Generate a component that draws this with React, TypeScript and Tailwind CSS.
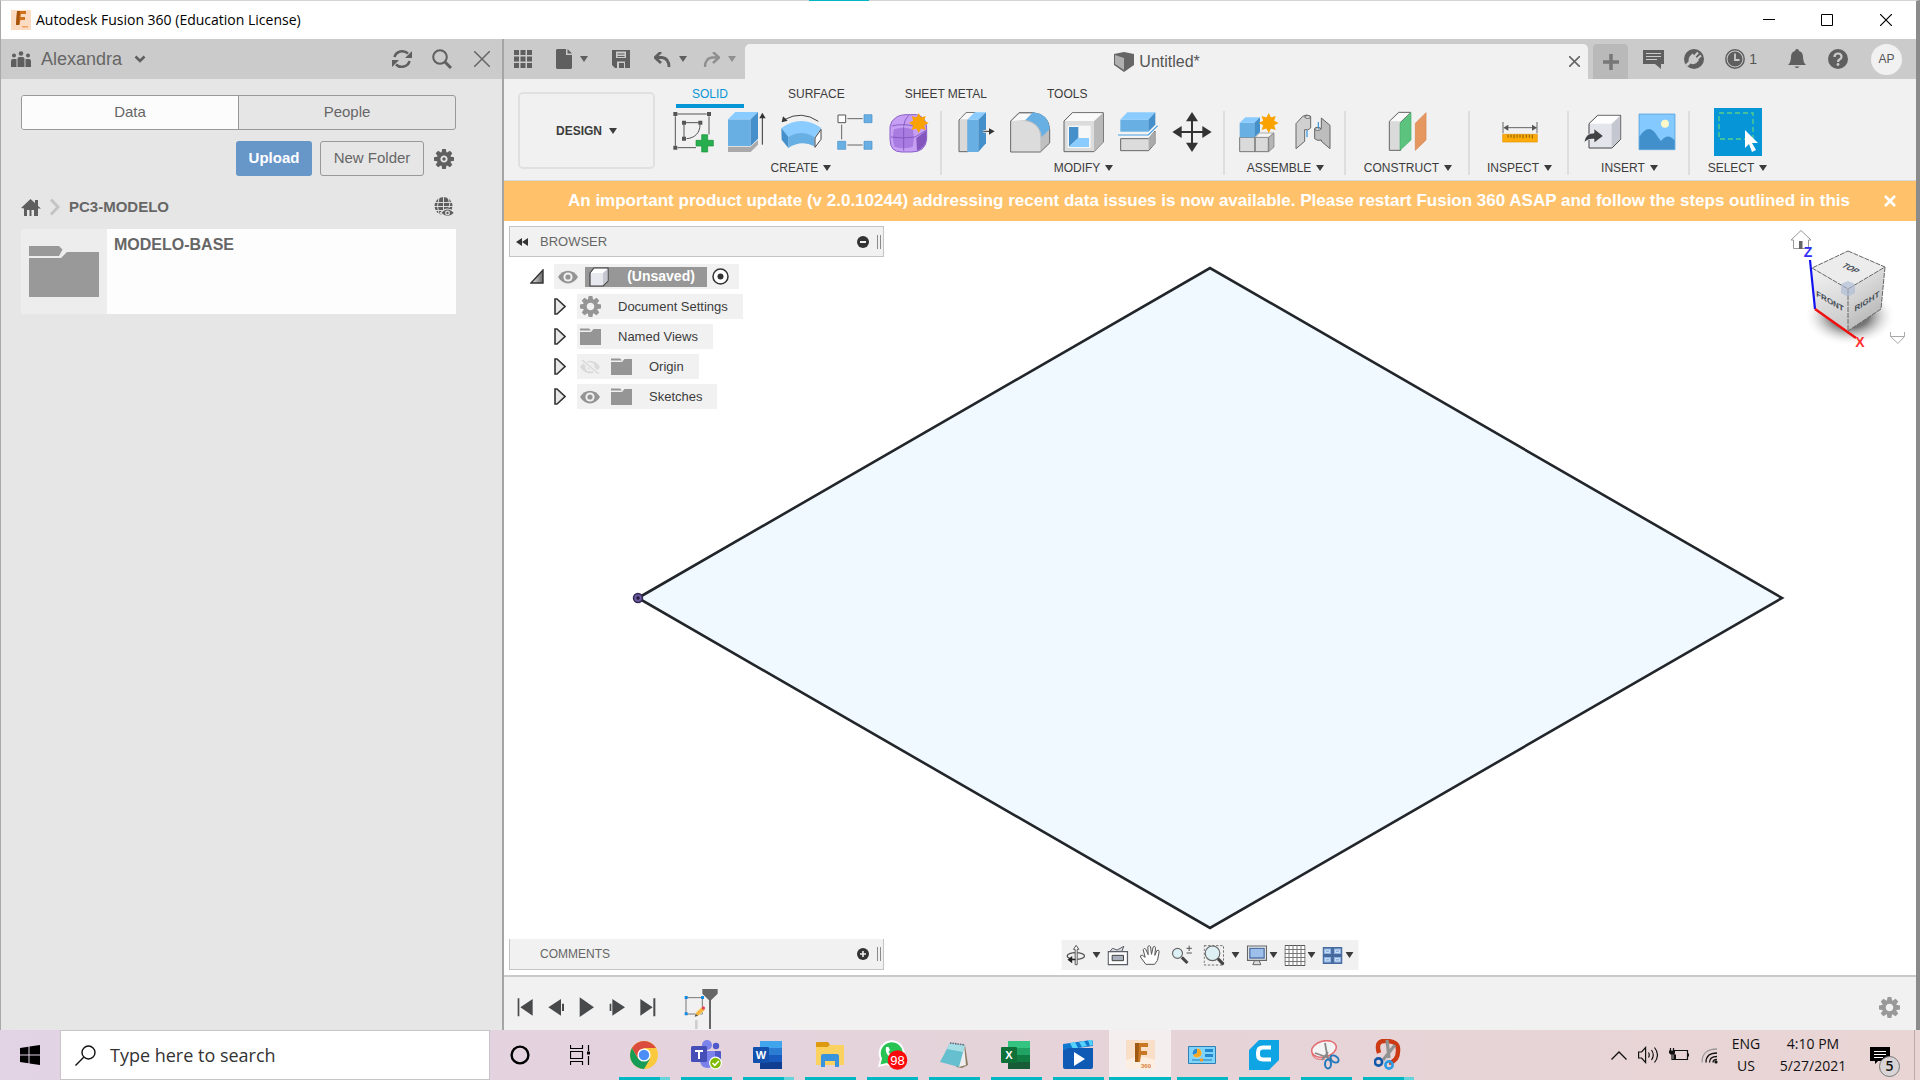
import React from "react";

type IconProps = { w: number; h: number; box: string; children: React.ReactNode; label?: string };

function Icon({ w, h, box, children }: IconProps) {
  return (
    <svg width={w} height={h} viewBox={box} className="block shrink-0" aria-hidden="true">
      {children}
    </svg>
  );
}

const Caret = ({ color = "#3c3c3c" }: { color?: string }) => (
  <Icon w={8} h={6} box="0 0 8 6">
    <path d="M0 0h8L4 6z" fill={color} />
  </Icon>
);

const GEAR_TEETH = [0, 45, 90, 135, 180, 225, 270, 315];

function Gear({ size = 20, color = "#5f5f5f", dot = false }: { size?: number; color?: string; dot?: boolean }) {
  return (
    <Icon w={size} h={size} box="-10 -10 20 20">
      <g fill={color}>
        {GEAR_TEETH.map((a) => (
          <path key={a} d="M-1.800 -10h3.600l.8 4h-5.200z" transform={`rotate(${a})`} />
        ))}
      </g>
      <circle r="5.300" fill="none" stroke={color} strokeWidth="3.400" />
      {dot && <circle r="1.700" fill={color} />}
    </Icon>
  );
}

function Eye({ off = false }: { off?: boolean }) {
  const c = off ? "#dadada" : "#949494";
  return (
    <Icon w={20} h={14} box="0 0 20 14">
      <path d="M0 7C5-1.500 15-1.500 20 7 15 15.500 5 15.500 0 7z" fill={c} />
      <circle cx="10" cy="7" r="4.600" fill="#f1f1f1" />
      <circle cx="10" cy="7" r="2.600" fill={c} />
      {off && (
        <>
          <path d="M2 0l17 14" stroke="#f1f1f1" strokeWidth="4" />
          <path d="M2 0l17 14" stroke={c} strokeWidth="1.600" />
        </>
      )}
    </Icon>
  );
}

const SmallFolder = () => (
  <Icon w={21} h={17} box="0 0 21 17">
    <path d="M0 .5h9l2 2H0zM0 4h11l2.500-3H21v16H0z" fill="#959595" />
  </Icon>
);

const Star = ({ x, y }: { x: number; y: number }) => (
  <g transform={`translate(${x} ${y})`} fill="#f9a200">
    {[0, 45, 90, 135, 180, 225, 270, 315].map((a) => (
      <path key={a} d="M-9 -12L0 -30L9 -12z" transform={`rotate(${a})`} />
    ))}
    <circle r="18" />
  </g>
);

/* ---------- ribbon icons ---------- */

const SketchIcon = () => (
  <Icon w={42} h={42} box="520 245 126 126">
    <g stroke="#555" strokeWidth="3" fill="none">
      <path d="M536 254h88M530 261v88M631 261v54M537 355h55M556 285v40M562 280h38M604 286c0 24-15 40-40 42" />
    </g>
    <path d="M524 248h12v12h-12zM625 248h12v12h-12zM524 349h12v12h-12zM550 274h12v12h-12zM599 274h12v12h-12zM550 322h12v12h-12z" fill="#555" />
    <path d="M609 316h18v17h17v17h-17v18h-18v-18h-17v-17h17z" fill="#27ae4f" stroke="#18913b" strokeWidth="2" />
  </Icon>
);
const ExtrudeIcon = () => (
  <Icon w={40} h={42} box="686 245 120 126">
    <path d="M689 352h68l22-20v14l-22 22h-68z" fill="#a9a9a9" />
    <path d="M689 270h68v80h-68z" fill="#68afe4" />
    <path d="M689 270l22-22h68l-22 22z" fill="#8accff" />
    <path d="M757 270l22-22v80l-22 22z" fill="#4590ca" />
    <path d="M792 346v-82" stroke="#333" strokeWidth="3" />
    <path d="M783 267l9-17 10 17z" fill="#333" />
  </Icon>
);
const RevolveIcon = () => (
  <Icon w={42} h={42} box="843 245 126 126">
    <path d="M847 296q60-42 120 0l-21 29q-39-25-78 0z" fill="#8accff" />
    <path d="M868 323q39-24 78 0v28q-39-20-78 5z" fill="#68afe4" />
    <path d="M847 296l21 27v33l-20-25z" fill="#4590ca" />
    <path d="M966 300v30l-18 24v-28z" fill="#fff" stroke="#444" strokeWidth="3" />
    <path d="M856 271q52-29 102 5" fill="none" stroke="#444" strokeWidth="3" />
    <path d="M848 279l4-18 14 13z" fill="#333" />
  </Icon>
);
const PatternIcon = () => (
  <Icon w={40} h={42} box="1001 245 120 126">
    <path d="M1038 268h46M1021 286v44M1038 347h46" stroke="#666" strokeWidth="3" />
    <path d="M1010 257h23v23h-23z" fill="#fff" stroke="#555" strokeWidth="3" />
    <path d="M1088 256h24v24h-24zM1009 336h24v24h-24zM1088 336h24v24h-24z" fill="#68afe4" stroke="#4590ca" strokeWidth="2" />
  </Icon>
);
const FormIcon = () => (
  <Icon w={40} h={42} box="1168 245 120 126">
    <path d="M1171 292q3-18 16-26 10-9 32-10h32q30 8 30 40v34q-4 38-45 38h-30q-35 0-35-38z" fill="#c69ff5" stroke="#8a5fc8" strokeWidth="3" />
    <path d="M1250 326l30-22v26q-3 26-28 34z" fill="#8256bd" />
    <path d="M1183 300q26-10 56 0 7 28 0 52-28 10-54 0-9-26-2-52z" fill="#a77be0" />
    <path d="M1212 292v72M1174 323q36 6 72 0l34-20M1212 290q2-20 15-32M1176 290q30-8 68 0l14-10" stroke="#7d52bb" strokeWidth="2.500" fill="none" />
    <Star x={1257} y={281} />
  </Icon>
);
const PressPullIcon = () => (
  <Icon w={40} h={42} box="78 245 120 126">
    <path d="M87 272l21-22h28l-21 22v95H87z" fill="#d9d9d9" stroke="#666" strokeWidth="3" />
    <path d="M90 270l20-19h26l-20 19z" fill="#f7f7f7" />
    <path d="M112 271h33v97h-33z" fill="#68afe4" />
    <path d="M112 271l22-22h34l-23 22z" fill="#8accff" />
    <path d="M145 271l23-22v93l-23 26z" fill="#4590ca" />
    <path d="M160 306h20" stroke="#f1f1f1" strokeWidth="8" />
    <path d="M160 306h20" stroke="#333" strokeWidth="3" />
    <path d="M177 297l17 9-17 10z" fill="#333" />
  </Icon>
);
const FilletIcon = () => (
  <Icon w={42} h={42} box="240 245 126 126">
    <path d="M245 275l25-25h42q48 5 50 51v40l-28 27h-89z" fill="#c0c0c0" stroke="#666" strokeWidth="3" />
    <path d="M248 275l23-22h40l-22 20z" fill="#fafafa" />
    <path d="M247 275h40q47 8 47 50v41h-87z" fill="#dcdcdc" />
    <path d="M289 272l23-23q48 5 50 51l-24 23q-4-43-49-51z" fill="#68afe4" />
  </Icon>
);
const ShellIcon = () => (
  <Icon w={42} h={42} box="402 245 126 126">
    <path d="M405 275l25-25h93v88l-28 29h-90z" fill="#dcdcdc" stroke="#666" strokeWidth="3" />
    <path d="M408 275l23-23h90l-25 23z" fill="#fafafa" />
    <path d="M495 276l27-25v86l-27 29z" fill="#b9b9b9" />
    <path d="M416 289h69v67h-69z" fill="#f7f7f7" />
    <path d="M420 293h28v33l-28 26z" fill="#4590ca" />
    <path d="M420 353l28-27h32v27z" fill="#8accff" />
  </Icon>
);
const SplitIcon = () => (
  <Icon w={42} h={42} box="563 245 126 126">
    <path d="M574 328h84l19-23v37l-19 22h-84z" fill="#dcdcdc" stroke="#666" strokeWidth="3" />
    <path d="M658 326l18-19v34l-18 21z" fill="#aaa" />
    <path d="M573 271h84v36h-84z" fill="#68afe4" />
    <path d="M573 271l21-22h84l-21 22z" fill="#8accff" />
    <path d="M657 271l21-22v37l-21 21z" fill="#4590ca" />
    <path d="M566 317h91l28-28" fill="none" stroke="#f7f7f7" strokeWidth="9" />
    <path d="M566 317h91l28-28" fill="none" stroke="#459bdf" strokeWidth="3.500" />
  </Icon>
);
const MoveIcon = () => (
  <Icon w={40} h={42} box="727 245 120 126">
    <path d="M787 265v86M745 308h84" stroke="#333" strokeWidth="6" />
    <path d="M787 248l18 28h-36zM787 368l18-28h-36zM728 308l28-18v36zM846 308l-28-18v36z" fill="#333" />
  </Icon>
);
const ComponentIcon = () => (
  <Icon w={40} h={42} box="928 245 120 126">
    <path d="M930 324h46v43h-46zM976 324h40v43h-40z" fill="#dadada" stroke="#777" strokeWidth="3" />
    <path d="M976 324l14-13h43l-16 13z" fill="#f5f5f5" stroke="#888" strokeWidth="2" />
    <path d="M1017 324l16-13v42l-16 14z" fill="#b5b5b5" stroke="#777" strokeWidth="2" />
    <path d="M930 280h44v44h-44z" fill="#68afe4" />
    <path d="M930 280l17-16h44l-17 16z" fill="#8accff" />
    <path d="M974 280l17-16v44l-17 16z" fill="#4590ca" />
    <Star x={1017} y={281} />
  </Icon>
);
const JointIcon = () => (
  <Icon w={38} h={42} box="1094 245 114 126">
    <g stroke="#666" strokeWidth="3" strokeLinejoin="round">
      <path d="M1100 283l20-22q12-8 24 0v35q-8 9-18 5v35l-26 22z" fill="#d0d0d0" />
      <ellipse cx="1135" cy="263" rx="9" ry="4" fill="#eee" />
      <path d="M1202 288l-26-22v32q-15-8-20 0v30q8 8 20 4v4l26 22z" fill="#bdbdbd" />
      <ellipse cx="1165" cy="299" rx="9" ry="4" fill="#eee" />
    </g>
    <path d="M1133 303v21M1167 278v20" stroke="#2f93dd" strokeWidth="3.500" />
  </Icon>
);
const PlaneIcon = () => (
  <Icon w={42} h={42} box="1374 245 126 126">
    <path d="M1381 276l28-27h36l-30 30v84h-34z" fill="#dadada" stroke="#666" strokeWidth="3" />
    <path d="M1384 276l26-25h32l-27 25z" fill="#fafafa" />
    <path d="M1413 282l33-32v82l-33 31z" fill="#5bc37e" stroke="#45b06a" strokeWidth="2" />
    <path d="M1459 282l32-32v82l-32 31z" fill="#e6965f" stroke="#d3824c" strokeWidth="2" />
  </Icon>
);
const MeasureIcon = () => (
  <Icon w={38} h={42} box="302 335 114 126">
    <path d="M308 368v34M410 368v34M316 385h86" stroke="#666" strokeWidth="3" />
    <path d="M309 385l15-9v18zM410 385l-15-9v18z" fill="#555" />
    <path d="M307 405h104v23H307z" fill="#fdab09" stroke="#e29600" strokeWidth="2" />
    <path d="M323 406v9M332 406v9M341 406v11M350 406v9M359 406v9M368 406v11M378 406v9M387 406v9M396 406v11" stroke="#6d4b00" strokeWidth="2.500" />
  </Icon>
);
const InsertIcon = () => (
  <Icon w={40} h={42} box="553 334 120 126">
    <path d="M571 372l26-25h69v72l-26 26h-69z" fill="#e4e5ec" stroke="#444" strokeWidth="3" />
    <path d="M573 372l25-24h66l-25 24z" fill="#fdfdfd" />
    <path d="M639 373l26-25v70l-26 26z" fill="#c5c7d0" />
    <path d="M556 429q4-30 30-29v-13l28 22-28 21v-12q-18-2-30 11z" fill="#404246" stroke="#f4f4f4" strokeWidth="2" />
  </Icon>
);
const PictureIcon = () => (
  <Icon w={40} h={42} box="710 334 120 126">
    <path d="M716 343h108v107H716z" fill="#84c9ff" stroke="#4596d3" strokeWidth="2" />
    <path d="M717 411q30-46 55 0l10 13q20-26 41-2v27H717z" fill="#4290cb" />
    <circle cx="794" cy="372" r="12" fill="#fdf8c9" />
  </Icon>
);
const SelectIcon = () => (
  <Icon w={48} h={48} box="0 0 48 48">
    <path d="M0 0h48v48H0z" fill="#0696d7" />
    <path d="M5 5h34v26H5z" fill="none" stroke="#5ad08c" strokeWidth="1.300" strokeDasharray="5 3" />
    <path d="M31 22v18l4-4 3 8 4-2-4-7h6z" fill="#fff" />
  </Icon>
);

const groups = [
  { name: "CREATE", cls: "w-[282px]", icons: [SketchIcon, ExtrudeIcon, RevolveIcon, PatternIcon, FormIcon] },
  { name: "MODIFY", cls: "w-[283px]", icons: [PressPullIcon, FilletIcon, ShellIcon, SplitIcon, MoveIcon] },
  { name: "ASSEMBLE", cls: "w-[121px]", icons: [ComponentIcon, JointIcon] },
  { name: "CONSTRUCT", cls: "w-[124px]", icons: [PlaneIcon] },
  { name: "INSPECT", cls: "w-[99px]", icons: [MeasureIcon] },
  { name: "INSERT", cls: "w-[121px]", icons: [InsertIcon, PictureIcon] },
  { name: "SELECT", cls: "w-[95px]", icons: [SelectIcon] },
];

/* ---------- title bar ---------- */

function TitleBar() {
  return (
    <header className="flex h-[38px] items-center bg-white pl-[10px] text-black">
      <Icon w={20} h={20} box="0 0 20 20">
        <path d="M0 0h20v20H0z" fill="#fbdcc2" />
        <path d="M6 1h9v3h-5l-.5 3H14v3H9.500l-1 5H5z" fill="#cf731d" />
        <path d="M6 1h3L8 15H5z" fill="#a4530d" />
        <path d="M11 16h6v1.500h-6z" fill="#f0a062" />
      </Icon>
      <h1 className="ml-[5px] flex-1 pb-px font-['Open_Sans',sans-serif] text-[14px] leading-5">
        Autodesk Fusion 360 (Education License)
      </h1>
      <div className="flex">
        <button aria-label="Minimize" className="grid h-8 w-[58px] place-items-center">
          <Icon w={12} h={12} box="0 0 12 12"><path d="M0 5.500h12" stroke="#000" /></Icon>
        </button>
        <button aria-label="Maximize" className="grid h-8 w-[58px] place-items-center">
          <Icon w={12} h={12} box="0 0 12 12"><path d="M.5.500h11v11H.5z" fill="none" stroke="#000" /></Icon>
        </button>
        <button aria-label="Close" className="grid h-8 w-[60px] place-items-center">
          <Icon w={12} h={12} box="0 0 12 12"><path d="M0 0l12 12M12 0L0 12" stroke="#000" strokeWidth="1.200" /></Icon>
        </button>
      </div>
    </header>
  );
}

/* ---------- data panel ---------- */

function DataPanel() {
  return (
    <aside className="flex w-[503px] shrink-0 flex-col border-r-2 border-[#a5a5a5] bg-[#e6e6e6] text-[#666]">
      <div className="flex h-10 items-center bg-[#cbcbcb] pl-[10px] pr-3">
        <Icon w={20} h={16} box="0 0 20 16">
          <g fill="#5f5f5f">
            <circle cx="10" cy="2.500" r="2.300" /><circle cx="3" cy="4.500" r="2" /><circle cx="17" cy="4.500" r="2" />
            <path d="M6.500 16V8q0-2 2-2h3q2 0 2 2v8zM0 16v-6q0-2 2-2h3.500v8zM20 16v-6q0-2-2-2h-3.500v8z" />
          </g>
        </Icon>
        <button className="ml-[10px] flex flex-1 items-center gap-3 text-[18px] leading-6">
          Alexandra
          <Icon w={12} h={8} box="0 0 12 8"><path d="M1.500 1.500L6 6l4.500-4.500" fill="none" stroke="#5f5f5f" strokeWidth="2.600" /></Icon>
        </button>
        <div className="flex items-center gap-[20px]">
          <button aria-label="Refresh">
            <Icon w={20} h={20} box="0 0 20 20">
              <g fill="none" stroke="#5f5f5f" strokeWidth="2.600"><path d="M2.500 8A8 7.500 0 0 1 16 4.500M17.500 12A8 7.500 0 0 1 4 15.500" /></g>
              <path d="M20 2v7h-7zM0 18v-7h7z" fill="#5f5f5f" />
            </Icon>
          </button>
          <button aria-label="Search">
            <Icon w={20} h={20} box="0 0 20 20">
              <circle cx="8" cy="8" r="6.800" fill="none" stroke="#5f5f5f" strokeWidth="2" />
              <path d="M13 13l6 6" stroke="#5f5f5f" strokeWidth="3" />
            </Icon>
          </button>
          <button aria-label="Close data panel" className="ml-[2px]">
            <Icon w={16} h={16} box="0 0 16 16"><path d="M0 0l16 16M16 0L0 16" stroke="#666" strokeWidth="1.500" /></Icon>
          </button>
        </div>
      </div>

      <div className="pl-5 pr-[46px] pt-4">
        <div className="flex h-[35px] overflow-hidden rounded-[3px] border border-[#999] text-[15px]">
          <button className="flex-1 border-r border-[#999] bg-[#fcfcfc]">Data</button>
          <button className="flex-1">People</button>
        </div>
        <div className="mt-[11px] flex items-center justify-end gap-2 pr-[2px]">
          <button className="h-[35px] w-[76px] rounded-[3px] bg-[#6796c9] text-[15px] font-bold text-white">Upload</button>
          <button className="h-[35px] w-[104px] rounded-[3px] border border-[#999] text-[15px]">New Folder</button>
          <button aria-label="Settings" className="ml-[2px]"><Gear dot /></button>
        </div>
        <div className="mt-5 flex h-[22px] items-center pr-[2px]">
          <Icon w={20} h={17} box="0 0 20 17">
            <path d="M0 9L9.500 0 14 4V1h3v6l3 2.500h-3V17h-4v-6h-2.500v6h-2v-6H6v6H3V9.500z" fill="#5f5f5f" />
          </Icon>
          <Icon w={28} h={18} box="0 0 28 18"><path d="M10 1.500l7 7.500-7 7.500" fill="none" stroke="#c4c4c4" strokeWidth="3" /></Icon>
          <span className="flex-1 text-[15px] font-bold leading-5">PC3-MODELO</span>
          <Icon w={20} h={20} box="0 0 20 20">
            <circle cx="9.500" cy="9" r="9" fill="#5f5f5f" />
            <path d="M0 5.500h19M0 9.500h19M0 13.500h12M9.500 0v18M5 1q-3 8 0 16M14 1q3 6 1 10" fill="none" stroke="#e6e6e6" strokeWidth=".9" />
            <path d="M6.500 16Q13.500 8 20.500 16 13.500 23 6.500 16z" fill="#5f5f5f" stroke="#e6e6e6" strokeWidth="1.200" />
            <circle cx="13.500" cy="16" r="2.400" fill="#e6e6e6" /><circle cx="13.500" cy="16" r="1.200" fill="#5f5f5f" />
          </Icon>
        </div>
        <a href="#modelo-base" className="mt-[11px] flex h-[85px] bg-[#fdfdfd]">
          <span className="grid w-[86px] place-items-center bg-[#ededed]">
            <Icon w={70} h={51} box="0 0 70 51">
              <path d="M0 0h30l3.500 3.500L30 10H0zM0 12h32l6-6h32v45H0z" fill="#999" />
            </Icon>
          </span>
          <span className="pl-[7px] pt-[6px] text-[16px] font-bold leading-5">MODELO-BASE</span>
        </a>
      </div>
    </aside>
  );
}

/* ---------- application bar ---------- */

function AppBar() {
  return (
    <div className="flex h-10 items-end bg-[#cbcbcb]">
      <div className="flex h-10 w-[241px] items-center pl-[10px]">
        <button aria-label="Data panel">
          <Icon w={18} h={18} box="0 0 18 18"><path d="M0 0h5v5H0zM6.500 0h5v5h-5zM13 0h5v5h-5zM0 6.500h5v5H0zM6.500 6.500h5v5h-5zM13 6.500h5v5h-5zM0 13h5v5H0zM6.500 13h5v5h-5zM13 13h5v5h-5z" fill="#5f5f5f" /></Icon>
        </button>
        <button aria-label="File" className="ml-6 flex items-center gap-2">
          <Icon w={16} h={20} box="0 0 16 20"><path d="M1 0h9v6h6v13l-1 1H1l-1-1V1zM11.500 0L16 4.500h-4.500z" fill="#5f5f5f" /></Icon>
          <Caret color="#5f5f5f" />
        </button>
        <button aria-label="Save" className="ml-6">
          <Icon w={18} h={18} box="0 0 18 18">
            <path d="M0 0h18v18H3l-3-3z" fill="#5f5f5f" />
            <path d="M4 1.500h10V8H4zM5 11.500h8V18H5z" fill="#cbcbcb" />
            <path d="M5.500 3.500h7v1h-7zM5.500 6h7v1h-7zM7 13h5v5H7z" fill="#5f5f5f" />
          </Icon>
        </button>
        <button aria-label="Undo" className="ml-6 flex items-center gap-2">
          <Icon w={17} h={15} box="0 0 17 15"><path d="M7 0L1 5.500 7 11M2 5.500h6q7 1 7 9.500" fill="none" stroke="#5f5f5f" strokeWidth="2.800" /></Icon>
          <Caret color="#5f5f5f" />
        </button>
        <button aria-label="Redo" className="ml-4 flex items-center gap-2">
          <Icon w={17} h={15} box="0 0 17 15"><path d="M10 0l6 5.500L10 11M15 5.500H9q-7 1-7 9.500" fill="none" stroke="#8f8f8f" strokeWidth="2.400" /></Icon>
          <Caret color="#8f8f8f" />
        </button>
      </div>
      <div className="flex h-[35px] flex-1 items-center rounded-t-[5px] bg-[#f1f1f1] pr-2 text-[#555]">
        <div className="flex flex-1 items-center justify-center gap-[5px] text-[16px] leading-5">
          <Icon w={20} h={20} box="0 0 20 20">
            <path d="M0 2l10-2 10 2v11l-10 7-10-7z" fill="#666" />
            <path d="M1 3l9 3v12l-9-6z" fill="#b0b0b0" />
          </Icon>
          Untitled*
        </div>
        <button aria-label="Close tab">
          <Icon w={11} h={11} box="0 0 11 11"><path d="M0 0l11 11M11 0L0 11" stroke="#666" strokeWidth="1.600" /></Icon>
        </button>
      </div>
      <button aria-label="New tab" className="ml-[5px] grid h-[35px] w-[35px] place-items-center rounded-t-[4px] bg-[#b9b9b9]">
        <Icon w={16} h={16} box="0 0 16 16"><path d="M8 0v16M0 8h16" stroke="#777" strokeWidth="3.500" /></Icon>
      </button>
      <div className="flex h-10 items-center pl-[15px] pr-[14px] text-[#555]">
        <button aria-label="Notifications feed">
          <Icon w={21} h={19} box="0 0 21 19">
            <path d="M0 0h21v14h-3v5l-6-5H0z" fill="#5f5f5f" />
            <path d="M3 3.500h15M3 6.500h15M3 9.500h11" stroke="#cbcbcb" strokeWidth="1.200" />
          </Icon>
        </button>
        <button aria-label="Extensions" className="ml-5">
          <Icon w={20} h={20} box="0 0 20 20">
            <circle cx="10" cy="10" r="10" fill="#5f5f5f" />
            <path d="M6 7l2.500-2.500L15 11l-2.500 3q-3 2-6 .5l-3 3-2-2 3-3Q4 9 6 7z" fill="#cbcbcb" />
            <path d="M9.500 8.500l4.500-5M12 11l5-4.500" stroke="#cbcbcb" strokeWidth="2.200" />
          </Icon>
        </button>
        <button aria-label="Job status, 1" className="ml-[21px] flex items-center gap-1 text-[14px]">
          <Icon w={20} h={20} box="0 0 20 20">
            <circle cx="10" cy="10" r="9.200" fill="none" stroke="#5f5f5f" strokeWidth="1.500" />
            <circle cx="10" cy="10" r="7.500" fill="#5f5f5f" />
            <path d="M10 4.500V11h4.500" fill="none" stroke="#cbcbcb" strokeWidth="1.800" />
          </Icon>
          1
        </button>
        <button aria-label="Alerts" className="ml-[31px]">
          <Icon w={18} h={20} box="0 0 18 20"><path d="M9 0q2 0 2 2 4 1 4 6 0 5 3 8H0q3-3 3-8 0-5 4-6 0-2 2-2zM6.500 17.500h5Q9 20.500 6.500 17.500z" fill="#5f5f5f" /></Icon>
        </button>
        <button aria-label="Help" className="ml-[22px]">
          <Icon w={20} h={20} box="0 0 20 20">
            <circle cx="10" cy="10" r="10" fill="#5f5f5f" />
            <path d="M6.500 8q0-3.500 3.500-3.500T13.500 8q0 1.500-2 2.500-1.500 1-1.500 2.500" fill="none" stroke="#cbcbcb" strokeWidth="2.200" />
            <circle cx="10" cy="15.500" r="1.400" fill="#cbcbcb" />
          </Icon>
        </button>
        <button className="ml-[23px] size-[31px] rounded-full bg-[#f1f1f1] text-[12px]">AP</button>
      </div>
    </div>
  );
}

/* ---------- ribbon ---------- */

function Ribbon() {
  return (
    <div className="flex h-[102px] border-b border-[#d9d9d9] bg-[#f1f1f1] text-[12px] text-[#3c3c3c]">
      <button className="ml-[14px] mt-[13px] flex h-[77px] w-[137px] items-center justify-center gap-[7px] rounded-[5px] border-2 border-[#e0e0e0] font-bold">
        DESIGN <Caret />
      </button>
      <div className="ml-[5px] flex flex-col">
        <nav className="flex h-[30px] gap-7 pl-4">
          <button className="border-b-4 border-[#0696d7] px-4 pt-1 text-[#0696d7]">SOLID</button>
          <button className="border-b-4 border-transparent px-4 pt-1">SURFACE</button>
          <button className="border-b-4 border-transparent px-4 pt-1">SHEET METAL</button>
          <button className="border-b-4 border-transparent px-4 pt-1">TOOLS</button>
        </nav>
        <div className="flex">
          {groups.map((g, i) => (
            <section key={g.name} className={`${g.cls} relative flex flex-col items-center`}>
              <div className="flex h-12 items-center justify-center gap-[14px]">
                {g.icons.map((I, k) => (
                  <button key={k} aria-label={`${g.name} tool ${k + 1}`} className={g.name === "SELECT" ? "" : "flex w-10 justify-center"}>
                    <I />
                  </button>
                ))}
              </div>
              <button className="flex items-center gap-[5px] leading-6">
                {g.name} <Caret />
              </button>
              {i < groups.length - 1 && <span className="absolute right-0 top-[3px] h-16 w-[2px] bg-[#dedede]" />}
            </section>
          ))}
        </div>
      </div>
    </div>
  );
}

/* ---------- browser tree ---------- */

const Arrow = () => (
  <Icon w={12} h={17} box="0 0 12 17"><path d="M1 1l2 0 8 7.500-8 7.500H1z" fill="#e8e8e8" stroke="#333" strokeWidth="1.600" /></Icon>
);

const tree = [
  { name: "Document Settings", kind: "gear", eye: null },
  { name: "Named Views", kind: "folder", eye: null },
  { name: "Origin", kind: "folder", eye: "off" },
  { name: "Sketches", kind: "folder", eye: "on" },
];

const Grip = () => <span className="h-[14px] w-1 border-x border-[#8a8a8a]" />;

function BrowserPanel() {
  return (
    <section className="absolute left-[5px] top-[5px] w-[375px] text-[13px] text-[#3c3c3c]">
      <div className="flex h-[31px] items-center border border-[#c4c4c4] bg-[#f1f1f1] pl-[6px] pr-[2px]">
        <button aria-label="Collapse browser">
          <Icon w={12} h={8} box="0 0 12 8"><path d="M6 0v8L0 4zM12 0v8L6 4z" fill="#333" /></Icon>
        </button>
        <h2 className="ml-3 flex-1 text-[#666]">BROWSER</h2>
        <button aria-label="Minimize browser" className="mr-2">
          <Icon w={12} h={12} box="0 0 12 12"><circle cx="6" cy="6" r="6" fill="#333" /><path d="M3 6h6" stroke="#f1f1f1" strokeWidth="2" /></Icon>
        </button>
        <Grip />
      </div>
      <ul className="mt-[7px] flex flex-col gap-[5px] pl-[21px]">
        <li className="flex h-[25px] items-center">
          <Icon w={14} h={15} box="0 0 14 15">
            <defs><linearGradient id="tri"><stop offset="0" stopColor="#eee" /><stop offset="1" stopColor="#666" /></linearGradient></defs>
            <path d="M1 14L13 1v13z" fill="url(#tri)" stroke="#333" strokeWidth="1.400" />
          </Icon>
          <div className="ml-[10px] flex h-[25px] items-center bg-[#f1f1f1] pl-1 pr-[10px]">
            <Eye />
            <div className="ml-[7px] flex h-5 w-[122px] items-center bg-[#979797] pl-1 text-[14px] font-bold text-white">
              <Icon w={20} h={20} box="0 0 20 20">
                <path d="M1 6l4-5h14v13l-5 5H1z" fill="#e8e9ee" stroke="#444" strokeWidth="1.200" />
                <path d="M2 6l3.500-4h13L14 6z" fill="#fff" /><path d="M14 6l4.500-4v12L14 18z" fill="#c5c7d0" />
              </Icon>
              <span className="flex-1 pl-[6px] text-center">(Unsaved)</span>
            </div>
            <button aria-label="Activate component" className="ml-[5px]">
              <Icon w={17} h={17} box="0 0 17 17"><circle cx="8.500" cy="8.500" r="7.500" fill="#fff" stroke="#333" strokeWidth="1.500" /><circle cx="8.500" cy="8.500" r="3" fill="#333" /></Icon>
            </button>
          </div>
        </li>
        {tree.map((t) => (
          <li key={t.name} className="flex h-[25px] items-center pl-6">
            <button aria-label={`Expand ${t.name}`}><Arrow /></button>
            <div className="ml-[11px] flex h-[25px] items-center bg-[#f1f1f1] pl-[3px] pr-[15px]">
              {t.eye && <span className="mr-[11px]"><Eye off={t.eye === "off"} /></span>}
              {t.kind === "gear" ? <Gear color="#959595" size={21} /> : <SmallFolder />}
              <span className="ml-[17px]">{t.name}</span>
            </div>
          </li>
        ))}
      </ul>
    </section>
  );
}

/* ---------- view cube ---------- */

function ViewCube() {
  return (
    <svg width="130" height="130" viewBox="1785 225 130 130" className="absolute right-px top-1" role="img" aria-label="View cube">
      <defs>
        <radialGradient id="shade"><stop offset=".4" stopColor="#666" /><stop offset="1" stopColor="#fff" stopOpacity="0" /></radialGradient>
        <linearGradient id="rightFace" x1="0" y1="0" x2=".4" y2="1"><stop offset="0" stopColor="#efefef" /><stop offset="1" stopColor="#b5b5b5" /></linearGradient>
        <linearGradient id="frontFace" x1="0" y1="0" x2=".2" y2="1"><stop offset="0" stopColor="#f2f2f2" /><stop offset="1" stopColor="#cdcdcd" /></linearGradient>
      </defs>
      <ellipse cx="1850" cy="316" rx="46" ry="30" fill="url(#shade)" opacity=".9" />
      <path d="M1791 240l10-9.500 10 9.500h-2.500v8.500h-15V240z" fill="#fff" stroke="#999" strokeWidth="1" />
      <path d="M1799 241h3.500v8h-3.500z" fill="#666" />
      <path d="M1848 251l37 16-37 22-36-21z" fill="#ececec" />
      <path d="M1812 268l36 21v42l-33-22z" fill="url(#frontFace)" />
      <path d="M1885 267l-37 22v42l33-22z" fill="url(#rightFace)" />
      <path d="M1848 251l37 16-37 22-36-21zM1848 289v42M1885 267l-4 42-33 22" fill="none" stroke="#666" strokeWidth="1" strokeDasharray="5 1" />
      <path d="M1841 284l7-3 7 3v9l-7 4-7-4z" fill="#a8b7d2" opacity=".6" />
      <g fontFamily="Liberation Sans, Arial, sans-serif" fontWeight="bold" fill="#444b55" textAnchor="middle">
        <text x="0" y="0" fontSize="8" transform="translate(1830 304) skewY(30)">FRONT</text>
        <text x="0" y="0" fontSize="8" transform="translate(1867 304) skewY(-32)">RIGHT</text>
        <text x="0" y="0" fontSize="8" transform="translate(1848 270) rotate(26) skewX(-32)">TOP</text>
      </g>
      <path d="M1810 260l5 49" stroke="#1010f0" strokeWidth="2.200" />
      <path d="M1815 309l41 29" stroke="#f01010" strokeWidth="2.500" />
      <text x="1808" y="257" fontFamily="Liberation Sans, Arial, sans-serif" fontWeight="bold" fontSize="14" fill="#3030f5" textAnchor="middle">Z</text>
      <text x="1860" y="347" fontFamily="Liberation Sans, Arial, sans-serif" fontWeight="bold" fontSize="14" fill="#ff3030" textAnchor="middle">X</text>
      <path d="M1890.500 332v4.500h14V332M1890.500 336.500l7.500 7 6.500-7" fill="none" stroke="#aaa" />
    </svg>
  );
}

/* ---------- navigation bar ---------- */

function NavBar() {
  return (
    <div className="absolute bottom-[5px] left-1/2 flex h-[30px] -translate-x-1/2 items-center bg-[#f1f1f1] pl-1 pr-[5px]">
      <button aria-label="Orbit" className="flex items-center gap-[7px]">
        <Icon w={20} h={21} box="74 59 60 63">
          <ellipse cx="105" cy="92" rx="26" ry="10" fill="none" stroke="#555" strokeWidth="4" />
          <path d="M106 60l8 12h-5v46h-6V72h-5z" fill="#fff" stroke="#555" strokeWidth="3" />
          <path d="M80 103l14-11v22z" fill="#222" /><path d="M90 103h14" stroke="#222" strokeWidth="4" />
        </Icon>
        <Caret />
      </button>
      <button aria-label="Look at" className="ml-[7px]">
        <Icon w={21} h={21} box="197 60 63 63">
          <path d="M199 80h58v39h-58z" fill="#fff" stroke="#5a5d66" strokeWidth="4" />
          <path d="M204 80l8-10 14 5 20-11-6 15z" fill="#ddd" stroke="#5a5d66" strokeWidth="3" />
          <path d="M211 91h34v16h-34z" fill="#a9afbb" stroke="#444" strokeWidth="3" />
        </Icon>
      </button>
      <button aria-label="Pan" className="ml-[11px]">
        <Icon w={21} h={21} box="295 59 63 63">
          <path d="M314 117l-16-22q-1-7 6-5l8 6-6-23q3-7 8-1l7 16-1-24q4-6 8 0l3 23 5-22q5-5 7 2l-2 23 6-14q7-4 7 3l-5 26-9 12z" fill="#fdfdfd" stroke="#555" strokeWidth="3" strokeLinejoin="round" />
        </Icon>
      </button>
      <button aria-label="Zoom" className="ml-[11px]">
        <Icon w={21} h={21} box="391 59 63 63">
          <path d="M422 96l17 17" stroke="#444" strokeWidth="9" />
          <circle cx="409" cy="84" r="15" fill="#ddf1f4" stroke="#666" strokeWidth="3.500" />
          <path d="M444 61v16M436 69h16M436 83h16" stroke="#555" strokeWidth="3" />
        </Icon>
      </button>
      <button aria-label="Fit" className="ml-[11px] flex items-center gap-[7px]">
        <Icon w={21} h={21} box="488 59 63 63">
          <path d="M490 61h58v58h-58z" fill="none" stroke="#555" strokeWidth="2.500" strokeDasharray="7 5" />
          <path d="M531 100l17 17" stroke="#444" strokeWidth="9" />
          <circle cx="515" cy="84" r="22" fill="#ddf1f4" stroke="#666" strokeWidth="3.500" />
        </Icon>
        <Caret />
      </button>
      <button aria-label="Display settings" className="ml-[7px] flex items-center gap-[2px]">
        <Icon w={21} h={21} box="612 59 63 63">
          <path d="M615 62h57v43h-57z" fill="#eee" stroke="#666" strokeWidth="3.500" />
          <path d="M622 69h43v29h-43z" fill="#9dbfea" stroke="#5275a8" strokeWidth="4" />
          <path d="M636 106h14l5 12h-24z" fill="#ddd" stroke="#666" strokeWidth="3" />
        </Icon>
        <Caret />
      </button>
      <button aria-label="Grid and snaps" className="ml-[7px] flex items-center gap-[2px]">
        <Icon w={21} h={21} box="0 0 21 21">
          <path d="M.5.500h20v20H.5z" fill="#fff" stroke="#555" />
          <path d="M4.500 0v21M8.500 0v21M12.500 0v21M16.500 0v21M0 4.500h21M0 8.500h21M0 12.500h21M0 16.500h21" stroke="#777" />
        </Icon>
        <Caret />
      </button>
      <button aria-label="Viewports" className="ml-[7px] flex items-center gap-[3px]">
        <Icon w={20} h={17} box="0 0 20 17">
          <path d="M.7.700h8.600v7H.7zM10.700.700h8.600v7h-8.600zM.7 9.300h8.600v7H.7zM10.700 9.300h8.600v7h-8.600z" fill="#8db3e2" stroke="#48699c" strokeWidth="1.400" />
          <path d="M3 3h4v2.500H3zM13 3h4v2.500h-4zM3 11.500h4V14H3zM13 11.500h4V14h-4z" fill="none" stroke="#dce9f9" strokeWidth=".8" />
        </Icon>
        <Caret />
      </button>
    </div>
  );
}

function Viewport() {
  return (
    <main className="relative min-h-0 flex-1 bg-white">
      <svg viewBox="0 0 1412 754" preserveAspectRatio="none" className="absolute inset-0 size-full" role="img" aria-label="Rectangle sketch">
        <path d="M134 377L706 47l572 330-572 330z" fill="#f0f9ff" stroke="#22262a" strokeWidth="2.600" />
        <circle cx="134" cy="377" r="4.500" fill="#6b5aa0" stroke="#33294f" strokeWidth="1.500" />
        <circle cx="134" cy="377" r="1.700" fill="#22183a" />
      </svg>
      <BrowserPanel />
      <ViewCube />
      <section className="absolute bottom-[5px] left-[5px] flex h-[31px] w-[375px] items-center border border-t-0 border-[#c4c4c4] bg-[#f1f1f1] pl-[30px] pr-[2px] text-[12px] text-[#666]">
        <h2 className="flex-1">COMMENTS</h2>
        <button aria-label="Expand comments" className="mr-2">
          <Icon w={12} h={12} box="0 0 12 12"><circle cx="6" cy="6" r="6" fill="#333" /><path d="M3 6h6M6 3v6" stroke="#f1f1f1" strokeWidth="1.600" /></Icon>
        </button>
        <Grip />
      </section>
      <NavBar />
    </main>
  );
}

function Timeline() {
  return (
    <footer className="flex h-[55px] items-center border-t-2 border-[#c9c9c9] bg-[#f1f1f1] pl-[13px] pr-4">
      <div className="flex items-center gap-[15px] pt-[7px]">
        <button aria-label="Go to start"><Icon w={16} h={20} box="50 233 48 60"><path d="M52 237h5v54h-5zM97 239v50l-37-25z" fill="#48494b" /></Icon></button>
        <button aria-label="Step back"><Icon w={16} h={20} box="142 233 48 60"><path d="M143 264l38-25v50zM184 253h6v22h-6z" fill="#48494b" /></Icon></button>
        <button aria-label="Play"><Icon w={15} h={20} box="238 233 45 60"><path d="M240 234l43 30-43 29z" fill="#48494b" /></Icon></button>
        <button aria-label="Step forward"><Icon w={16} h={20} box="329 233 48 60"><path d="M331 253h5v22h-5zM339 239l38 25-38 25z" fill="#48494b" /></Icon></button>
        <button aria-label="Go to end"><Icon w={16} h={20} box="426 233 48 60"><path d="M427 239l37 25-37 25zM466 237h6v54h-6z" fill="#48494b" /></Icon></button>
      </div>
      <div className="ml-7 flex-1 self-end">
        <Icon w={34} h={42} box="555 204 102 126">
          <path d="M561 233h49v49h-49z" fill="none" stroke="#777" strokeWidth="3" />
          <path d="M557 228h9v9h-9zM606 228h9v9h-9zM557 277h9v9h-9z" fill="#1589e0" />
          <path d="M587 290l4-13 18-17 10 9-20 18z" fill="#f6b73c" stroke="#f1f1f1" strokeWidth="2" />
          <path d="M587 290l3-9 7 6z" fill="#555" /><circle cx="613" cy="264" r="5" fill="#e8415a" />
          <path d="M588 300h8v27h-8z" fill="#cfcfcf" />
          <path d="M610 207h46v14l-20 20v86h-6v-86l-20-20z" fill="#666" />
        </Icon>
      </div>
      <button aria-label="Timeline settings" className="pt-[7px]"><Gear color="#999" size={21} /></button>
    </footer>
  );
}

/* ---------- task bar ---------- */

const Chrome = () => (
  <Icon w={28} h={28} box="-14 -14 28 28">
    <circle r="14" fill="#fbc93d" />
    <path d="M-12.100-7A14 14 0 0 1 12.100-7H0L-6 3.500z" fill="#db4c3f" />
    <path d="M-12.100-7A14 14 0 0 0 0 14L6.200 3.500H-6z" fill="#179c58" />
    <circle r="6.600" fill="#fff" /><circle r="5.200" fill="#4d8df6" />
  </Icon>
);
const Teams = () => (
  <Icon w={31} h={30} box="0 0 31 30">
    <circle cx="16" cy="5" r="5" fill="#7b83eb" /><circle cx="25" cy="6" r="3.200" fill="#5059c9" />
    <path d="M20 11h9q1 0 1 1v8q-3 6-10 3z" fill="#5059c9" /><path d="M9 11h15v11q-2 6-8 6-7-1-7-8z" fill="#7b83eb" />
    <rect y="6" width="16" height="16" rx="1.500" fill="#464eb8" />
    <path d="M4 10h8v2H9v7H7v-7H4z" fill="#fff" />
    <circle cx="24.500" cy="23" r="6.500" fill="#fff" /><circle cx="24.500" cy="23" r="5.300" fill="#7fba00" />
    <path d="M21.500 23l2.300 2.300 4-4.300" fill="none" stroke="#fff" strokeWidth="1.600" />
  </Icon>
);

function Office({ colors, letter }: { colors: string[]; letter: string }) {
  return (
    <Icon w={30} h={28} box="0 0 30 28">
      {colors.slice(0, 4).map((c, i) => <path key={i} d={`M7 ${i * 7}h22v7H7z`} fill={c} />)}
      <rect y="6" width="16" height="16" rx="1" fill={colors[4]} />
      <text x="8" y="18" fontFamily="Liberation Sans, sans-serif" fontWeight="bold" fontSize="11" fill="#fff" textAnchor="middle">{letter}</text>
    </Icon>
  );
}
const Word = () => <Office letter="W" colors={["#41a5ee", "#2b7cd3", "#185abd", "#103f91", "#1351ad"]} />;
const Excel = () => <Office letter="X" colors={["#33c481", "#21a366", "#107c41", "#185c37", "#0f703a"]} />;
const Explorer = () => (
  <Icon w={28} h={26} box="0 0 28 26">
    <path d="M0 1q0-1 1-1h11l2 3-2 2H0z" fill="#dd9a10" /><path d="M0 5h12l2-2h14v20H0z" fill="#fbd25f" />
    <path d="M5 14q0-2 2-2h14q2 0 2 2v11h-4v-6H9v6H5z" fill="#3a94dd" />
  </Icon>
);
const WhatsApp = () => (
  <Icon w={31} h={30} box="0 0 31 30">
    <path d="M1 27l2-8A13 13 0 1 1 9 25z" fill="#fff" /><path d="M3.500 24.500l1.500-6A11 11 0 1 1 9.500 23z" fill="#27c454" />
    <path d="M9 7l2.500 0 1.500 3-1.500 2q2 3.500 5 4.500l2-2 3 2-1 3q-3 1.500-7-1.500-6-5-4.500-11z" fill="#fff" />
    <circle cx="20.500" cy="20" r="9.800" fill="#fa0a0a" />
    <text x="20.500" y="24.500" fontFamily="Liberation Sans, sans-serif" fontSize="13" fill="#fff" textAnchor="middle">98</text>
  </Icon>
);
const Notepad = () => (
  <Icon w={28} h={26} box="0 0 28 26">
    <path d="M25 3l3 20-6 3-6-1z" fill="#8d7b62" /><path d="M24 2l2 21-7 2-8-6z" fill="#eee" />
    <path d="M10 1l15 2-6 22-19-5z" fill="#66bfce" /><path d="M10 1l15 2-2 7-16-3z" fill="#a6dfe6" />
    <path d="M10 1l15 2" stroke="#667" strokeWidth="1.600" strokeDasharray="1.500 1" />
  </Icon>
);
const Movies = () => (
  <Icon w={30} h={29} box="0 0 30 29">
    <path d="M0 4l28-4q2 0 2 2v4L0 10z" fill="#1178d0" /><path d="M7 3l5-1 3 6-5 1zM16 2l5-1 3 5-5 1zM25 0h4l1 5-3 1z" fill="#54d2fa" />
    <path d="M0 10l6-2h24v19q0 2-2 2H2q-2 0-2-2z" fill="#0f5ab5" /><path d="M11 12l11 7-11 7z" fill="#fff" />
  </Icon>
);
const FusionTask = () => (
  <Icon w={29} h={29} box="0 0 29 29">
    <path d="M0 0h29v29H0z" fill="#fadfc8" /><path d="M0 20q14-6 29 0v9H0z" fill="#fceee1" />
    <path d="M9 3h13v4h-7v4h6v4h-6l-1 7H9z" fill="#c87722" /><path d="M9 3h4l-1 19H9z" fill="#a05a14" />
    <text x="20" y="28" fontFamily="Liberation Sans, sans-serif" fontWeight="bold" fontSize="6" fill="#d9823a" textAnchor="middle">360</text>
  </Icon>
);
const ControlPanel = () => (
  <Icon w={28} h={18} box="0 0 28 18">
    <path d="M.5.500h27v17H.5z" fill="#7fd4fb" stroke="#2f7fb5" />
    <circle cx="9" cy="7" r="4.500" fill="#fff" /><path d="M9 7V2.500A4.500 4.500 0 1 1 5 9z" fill="#f6a821" /><path d="M9 7V2.500A4.500 4.500 0 0 0 5 9z" fill="#2a8ad0" />
    <path d="M17 3h8v3h-8zM17 8h8v3h-8z" fill="#2488cf" /><path d="M4 14h20" stroke="#277db5" /><path d="M12 12.500h3v3h-3z" fill="#f69a21" />
  </Icon>
);
const Cura = () => (
  <Icon w={30} h={30} box="0 0 30 30">
    <path d="M10 0h20v20L20 30H0V10z" fill="#0fa5e4" />
    <path d="M22 7.500h-8q-5 0-5 5v2q0 5 5 5h8" fill="none" stroke="#fff" strokeWidth="4" />
  </Icon>
);
const Snip = () => (
  <Icon w={30} h={30} box="0 0 30 30">
    <ellipse cx="13" cy="9" rx="12.500" ry="8" transform="rotate(-14 13 9)" fill="#f4f4f4" stroke="#e36a6e" strokeWidth="1.500" />
    <path d="M1 14q2 7 13 5" fill="none" stroke="#e36a6e" /><path d="M14 3l3 17M4 13l17 6M17 12l-6 8" stroke="#888" strokeWidth="1.800" />
    <ellipse cx="17" cy="24" rx="3" ry="4.500" fill="none" stroke="#2479bd" strokeWidth="2" /><ellipse cx="23.500" cy="19" rx="4.500" ry="3" transform="rotate(35 23.500 19)" fill="none" stroke="#2479bd" strokeWidth="2" />
  </Icon>
);
const SnipSketch = () => (
  <Icon w={28} h={31} box="0 0 28 31">
    <path d="M5 14Q1 1 12 2q13 0 12 10 0 10-9 12" fill="none" stroke="#cb3a12" strokeWidth="4.500" />
    <path d="M13 1l2 18M21 6L9 21" stroke="#929292" strokeWidth="3.200" />
    <circle cx="4.500" cy="23" r="3.600" fill="none" stroke="#1459a8" strokeWidth="2.600" /><circle cx="15" cy="26" r="3.600" fill="none" stroke="#2c9be4" strokeWidth="2.600" />
  </Icon>
);

const tasks = [
  { name: "Chrome", I: Chrome, stacked: true },
  { name: "Teams", I: Teams },
  { name: "Word", I: Word, stacked: true },
  { name: "File Explorer", I: Explorer },
  { name: "WhatsApp", I: WhatsApp },
  { name: "Notepad", I: Notepad },
  { name: "Excel", I: Excel },
  { name: "Movies", I: Movies },
  { name: "Fusion 360", I: FusionTask, active: true },
  { name: "Control Panel", I: ControlPanel },
  { name: "Cura", I: Cura },
  { name: "Snipping Tool", I: Snip },
  { name: "Snip and Sketch", I: SnipSketch, stacked: true },
];

function TaskBar() {
  return (
    <div className="flex h-[50px] bg-linear-to-r from-[#e2d3e5] via-[#e5d3da] to-[#e9d5d4] font-['Open_Sans',sans-serif] text-[#111]">
      <button aria-label="Start" className="grid w-[60px] place-items-center">
        <Icon w={20} h={20} box="0 0 20 20"><path d="M0 3l8.500-1.300v7.800H0zM9.500 1.500L20 0v9.500H9.500zM0 10.500h8.500v7.800L0 17zM9.500 10.500H20V20L9.500 18.500z" fill="#000" /></Icon>
      </button>
      <label className="flex w-[430px] items-center border border-[#c8c4ca] bg-white pl-[14px]">
        <Icon w={21} h={21} box="0 0 21 21"><circle cx="13.500" cy="7.500" r="6.500" fill="none" stroke="#111" strokeWidth="1.400" /><path d="M8.700 12.300L.5 20.500" stroke="#111" strokeWidth="1.400" /></Icon>
        <input aria-label="Search" placeholder="Type here to search" className="ml-[14px] min-w-0 flex-1 bg-transparent text-[18px] outline-none placeholder:text-[#333]" />
      </label>
      <button aria-label="Cortana" className="grid w-[60px] place-items-center">
        <Icon w={20} h={20} box="0 0 20 20"><circle cx="10" cy="10" r="8.400" fill="none" stroke="#000" strokeWidth="2.400" /></Icon>
      </button>
      <button aria-label="Task view" className="grid w-[63px] place-items-center pr-[3px]">
        <Icon w={20} h={20} box="0 0 20 20">
          <path d="M.5 0v3.500h12V0M.5 20v-3.500h12V20M.5 6.500h12v7H.5zM18.500 0v6M18.500 11v9" fill="none" stroke="#000" strokeWidth="1.200" />
          <path d="M17 6.500h3v3h-3z" fill="#000" />
        </Icon>
      </button>
      {tasks.map(({ name, I, stacked, active }) => (
        <button key={name} aria-label={name} className={`flex w-[62px] flex-col items-center ${active ? "bg-[#f5eeef]" : ""}`}>
          <span className="grid flex-1 place-items-center pt-[2px]"><I /></span>
          <span className={`flex h-[3px] bg-[#00b7c3] ${active ? "w-full" : "w-[51px]"}`}>
            {stacked && <span className="ml-auto w-[10px] bg-[#66d4da]" />}
          </span>
        </button>
      ))}
      <div className="ml-auto flex items-center text-[14px] leading-[22px]">
        <button aria-label="Hidden icons"><Icon w={16} h={9} box="0 0 16 9"><path d="M.5 8.500L8 1l7.500 7.500" fill="none" stroke="#111" strokeWidth="1.300" /></Icon></button>
        <button aria-label="Volume" className="ml-[11px]">
          <Icon w={21} h={18} box="0 0 21 18"><path d="M.6 6h3l4-4.500v15L3.600 12h-3zM10.500 6.500q1.500 2.500 0 5M13.500 4q3.500 5 0 10M16.500 1.500q6 7.500 0 15" fill="none" stroke="#111" strokeWidth="1.200" /></Icon>
        </button>
        <button aria-label="Battery" className="ml-[10px]">
          <Icon w={20} h={14} box="0 0 20 14"><path d="M5 2.500h13.500v9H5zM19.500 5.500v3M1.500 0v3M4.500 0v3M3 6v5.500h2" fill="none" stroke="#111" strokeWidth="1.200" /><path d="M0 2.500h6V5L4.500 6.500h-3L0 5zM5 6.500h2V11H5z" fill="#111" /></Icon>
        </button>
        <button aria-label="Network" className="ml-3">
          <Icon w={17} h={17} box="0 0 17 17">
            <path d="M1 15.500Q1 2 16 2" fill="none" stroke="#999" strokeWidth="1.300" /><path d="M5 15.500Q5 6 16 6M8.500 15.500q0-6 7.500-6M12 15.500q0-3 4-3" fill="none" stroke="#111" strokeWidth="1.300" /><circle cx="15" cy="15" r="1.600" fill="#111" />
          </Icon>
        </button>
        <button className="ml-[10px] w-[36px] text-center">ENG US</button>
        <button className="ml-3 w-[74px] whitespace-nowrap text-center">4:10 PM<br />5/27/2021</button>
        <button aria-label="5 new notifications" className="relative ml-5 mr-[24px]">
          <Icon w={20} h={17} box="0 0 20 17"><path d="M0 0h20v14H8l-3 3v-3H0z" fill="#000" /><path d="M4 4.500h12M4 7.500h12M4 10.500h9" stroke="#fff" strokeWidth="1.100" /></Icon>
          <span className="absolute -right-[10px] top-[9px] grid size-[21px] place-items-center rounded-full border border-[#777] bg-[#d9d4d5] text-[14px] leading-4 font-semibold">5</span>
        </button>
        <span className="h-[50px] w-[6px] border-l border-[#b9abac]" />
      </div>
    </div>
  );
}

export default function App() {
  return (
    <div className="flex min-h-screen flex-col bg-[#cbcbcb] font-['Liberation_Sans',Arial,sans-serif]">
      <div className="relative flex flex-1 flex-col border-l border-r-4 border-t border-l-[#a9a9a9] border-r-[#8b8b8b] border-t-[#d5d5d5]">
        <span className="absolute -top-px left-[808px] h-px w-[60px] bg-[#00b7c3]" />
        <TitleBar />
        <div className="flex flex-1">
          <DataPanel />
          <div className="flex min-w-0 flex-1 flex-col">
            <AppBar />
            <Ribbon />
            <div role="alert" className="flex h-10 items-center bg-[#ffc26b] pl-16 pr-5 text-[17px] font-bold text-white">
              <p className="flex-1 whitespace-nowrap">
                An important product update (v 2.0.10244) addressing recent data issues is now available. Please restart Fusion 360 ASAP and follow the steps outlined in this
              </p>
              <button aria-label="Dismiss">
                <Icon w={12} h={12} box="0 0 12 12"><path d="M1 1l10 10M11 1L1 11" stroke="#fff" strokeWidth="2.600" /></Icon>
              </button>
            </div>
            <Viewport />
            <Timeline />
          </div>
        </div>
      </div>
      <TaskBar />
    </div>
  );
}
